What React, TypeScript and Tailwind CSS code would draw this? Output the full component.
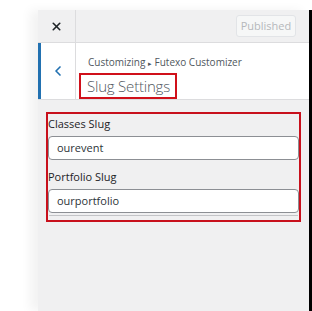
import { ChevronLeft, X } from 'lucide-react';

const fields = [
  { label: 'Classes Slug', value: 'ourevent' },
  { label: 'Portfolio Slug', value: 'ourportfolio' },
];

export default function App() {
  return (
    <div className="flex h-[311px] w-[312px] bg-white pl-[38px] pt-[10px] font-['Open_Sans',sans-serif] overflow-hidden">
      <div className="relative flex flex-1 flex-col bg-[#f0f0f1] shadow-[-8px_0_10px_rgba(0,0,0,0.05)]">
        {/* top bar */}
        <div className="flex h-[33px] items-center border-b border-[#dcdcde]">
          <div className="flex h-full w-[38px] items-center justify-center border-r border-[#dcdcde] text-[#1d2327]">
            <X className="h-[13px] w-[13px]" strokeWidth={3} />
          </div>
          <div className="flex flex-1 justify-end pr-[13px]">
            <div className="flex h-[22px] w-[60px] items-center justify-center rounded-[3px] border border-[#e2e4e7] bg-[#f6f7f7] text-[11px] text-[#b5b8bb]">
              Published
            </div>
          </div>
        </div>

        {/* section header */}
        <div className="flex h-[57px] border-b border-[#dcdcde] bg-white">
          <div className="flex w-[38px] items-center justify-center border-l-[3px] border-r border-l-[#2271b1] border-r-[#dcdcde] text-[#2271b1]">
            <ChevronLeft className="h-[16px] w-[16px]" strokeWidth={2.5} />
          </div>
          <div className="flex flex-col pl-[3px] pt-[11px]">
            <div className="whitespace-nowrap pl-[9px] text-[10px] leading-[16px] text-[#50575e]">
              Customizing <span className="text-[7px]">▸</span> Futexo Customizer
            </div>
            <div className="mt-[1px] w-[98px] whitespace-nowrap border-2 border-[#d0101a] pl-[6px] text-[15px] font-light leading-[22px] tracking-[-0.2px] text-[#50575e]">
              Slug Settings
            </div>
          </div>
        </div>

        {/* controls */}
        <div className="mx-[8px] mt-[12px] flex flex-col border-2 border-[#c8101c] pb-[3px]">
          {fields.map((f, i) => (
            <div key={f.label} className={i === 0 ? 'pt-[2px]' : 'pt-[9px]'}>
              <div className="text-[11px] leading-[16px] text-[#1d2327]">{f.label}</div>
              <div className="mt-[4px] flex h-[24px] items-center rounded-[4px] border border-[#8c8f94] bg-white px-[8px] text-[11px] text-[#2c3338]">
                {f.value}
              </div>
            </div>
          ))}
          <div className="mx-[1px] mt-[2px] h-[2px] border-t border-[#c3c4c7]" />
        </div>
      </div>
      <div className="w-[3px] bg-black" />
    </div>
  );
}
